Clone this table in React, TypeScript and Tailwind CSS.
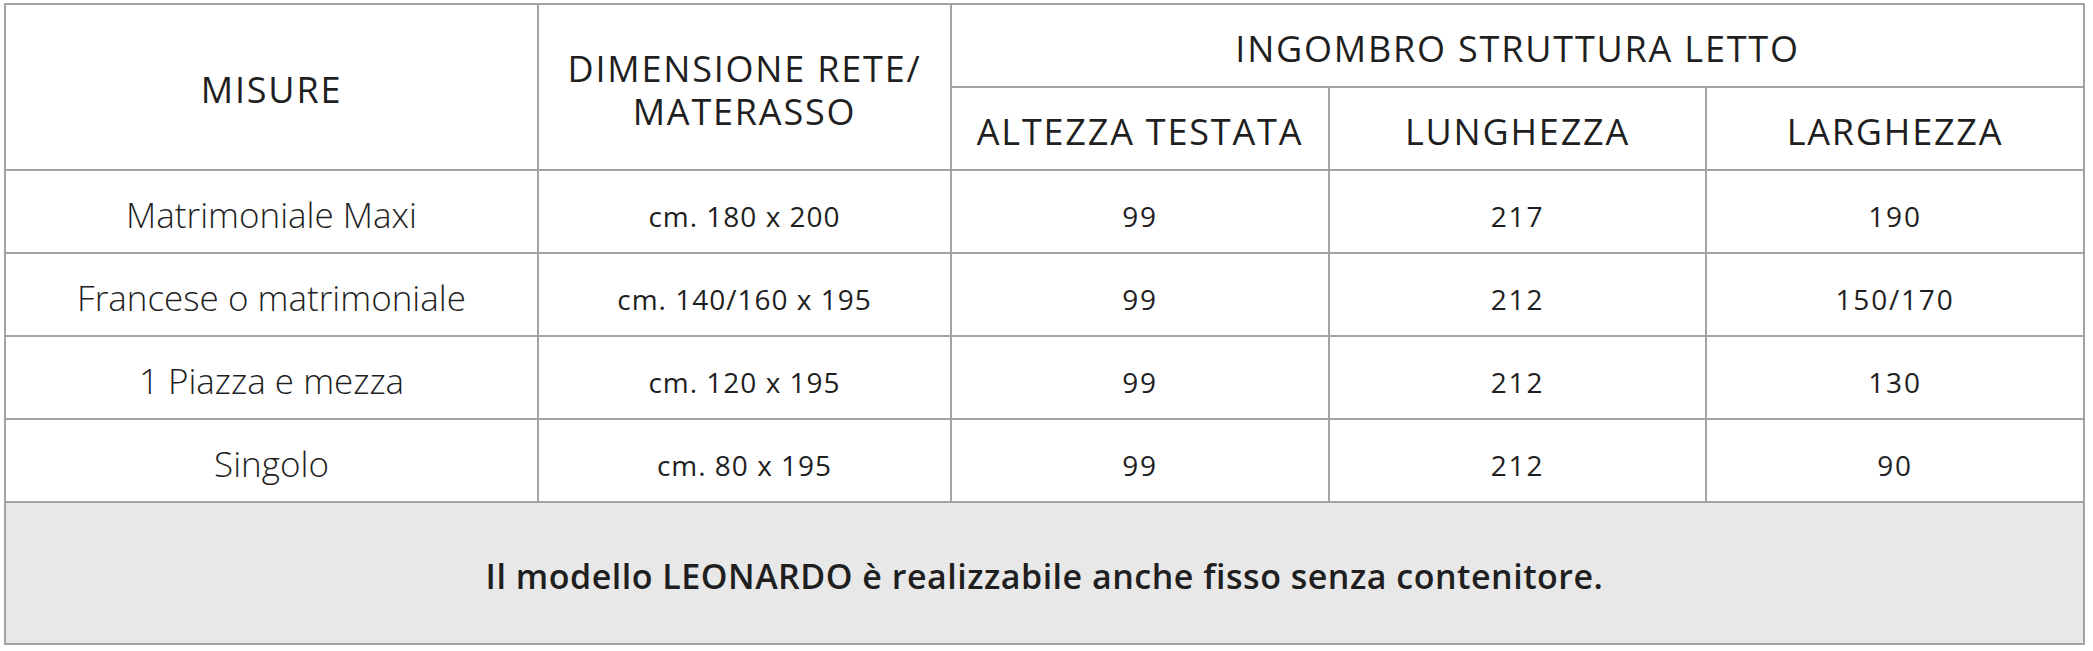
const rows = [
  { misura: 'Matrimoniale Maxi', rete: 'cm. 180 x 200', altezza: '99', lunghezza: '217', larghezza: '190' },
  { misura: 'Francese o matrimoniale', rete: 'cm. 140/160 x 195', altezza: '99', lunghezza: '212', larghezza: '150/170' },
  { misura: '1 Piazza e mezza', rete: 'cm. 120 x 195', altezza: '99', lunghezza: '212', larghezza: '130' },
  { misura: 'Singolo', rete: 'cm. 80 x 195', altezza: '99', lunghezza: '212', larghezza: '90' },
]

const cell = 'border-2 border-[#a3a3a3] text-center align-middle'
const head = `${cell} text-[36px] font-normal tracking-[1.8px] pt-[6px]`
const num = `${cell} text-[28px] font-medium pt-[8px] tracking-[1.8px]`

export default function App() {
  return (
    <div className="bg-white pl-[4px] pt-[3px] pr-[10px] font-['Open_Sans',sans-serif] text-[#1f1f1f]">
      <table className="w-[2079px] table-fixed border-collapse">
        <colgroup>
          <col className="w-[533px]" />
          <col className="w-[413px]" />
          <col className="w-[378px]" />
          <col className="w-[377px]" />
          <col className="w-[378px]" />
        </colgroup>
        <thead>
          <tr className="h-[83px]">
            <th rowSpan={2} className={head}>
              MISURE
            </th>
            <th rowSpan={2} className={`${head} leading-[43px] tracking-[1.3px]`}>
              DIMENSIONE RETE/
              <br />
              MATERASSO
            </th>
            <th colSpan={3} className={head}>
              INGOMBRO STRUTTURA LETTO
            </th>
          </tr>
          <tr className="h-[83px]">
            <th className={head}>ALTEZZA TESTATA</th>
            <th className={head}>LUNGHEZZA</th>
            <th className={head}>LARGHEZZA</th>
          </tr>
        </thead>
        <tbody>
          {rows.map((r) => (
            <tr key={r.misura} className="h-[83px]">
              <td className={`${cell} text-[35px] font-light pt-[8px]`}>{r.misura}</td>
              <td className={`${cell} text-[28px] font-medium pt-[8px] tracking-[1px]`}>{r.rete}</td>
              <td className={num}>{r.altezza}</td>
              <td className={num}>{r.lunghezza}</td>
              <td className={num}>{r.larghezza}</td>
            </tr>
          ))}
          <tr className="h-[142px]">
            <td colSpan={5} className={`${cell} bg-[#e8e8e8] text-[34px] font-semibold pt-[6px] tracking-[0.5px]`}>
              Il modello LEONARDO è realizzabile anche fisso senza contenitore.
            </td>
          </tr>
        </tbody>
      </table>
    </div>
  )
}
